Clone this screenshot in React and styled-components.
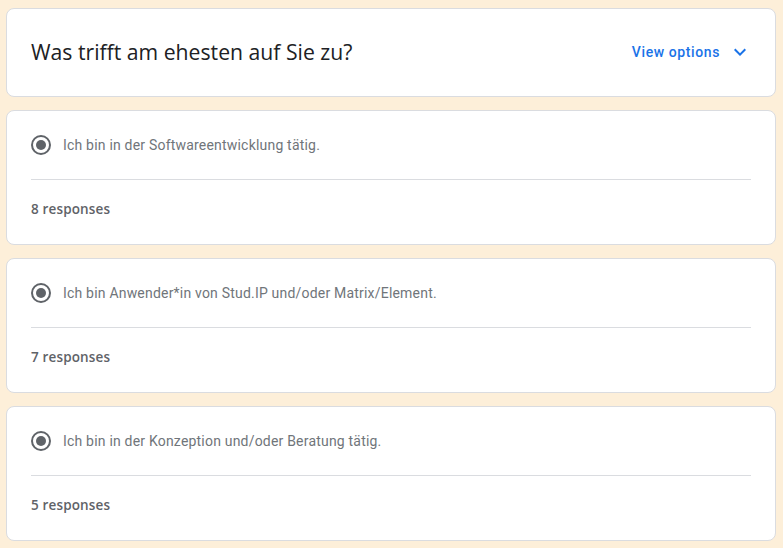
import React from 'react';
import styled, { createGlobalStyle } from 'styled-components';

const GlobalStyle = createGlobalStyle`
    html, body {
        margin: 0;
        padding: 0;
        background: #fdefd9;
        font-family: Roboto, 'Liberation Sans', sans-serif;
    }
`;

const PageStyled = styled.div`
    display: flex;
    flex-direction: column;
    gap: 13px;
    padding: 8px 7px 7px 6px;
`;

const CardStyled = styled.div`
    background: #fff;
    border: 1px solid #dadce0;
    border-radius: 8px;
    padding: ${(p) => p.$padding || '24px'};
`;

const HeaderRow = styled.div`
    display: flex;
    align-items: center;
    justify-content: space-between;
    height: 87px;
    padding: 0 23px 2px 24px;
    box-sizing: border-box;
`;

const TitleStyled = styled.h2`
    margin: 0;
    font-family: 'Open Sans', Roboto, sans-serif;
    font-weight: 400;
    font-size: 21.2px;
    color: #202124;
`;

const ViewOptionsButton = styled.button`
    display: flex;
    align-items: center;
    gap: 8px;
    background: none;
    border: none;
    padding: 0;
    cursor: pointer;
    color: #1a73e8;
    font-family: Roboto, sans-serif;
    font-weight: 500;
    font-size: 14px;
    letter-spacing: 0.6px;

    svg {
        width: 24px;
        height: 24px;
        fill: #1a73e8;
    }
`;

const OptionRow = styled.div`
    display: flex;
    align-items: center;
    gap: 12px;
    height: 20px;
    padding-bottom: 24px;
    border-bottom: 1px solid #dadce0;
`;

const RadioStyled = styled.span`
    width: 20px;
    height: 20px;
    box-sizing: border-box;
    border: 2px solid #5f6368;
    border-radius: 50%;
    display: flex;
    align-items: center;
    justify-content: center;
    flex-shrink: 0;

    &::after {
        content: '';
        width: 10px;
        height: 10px;
        border-radius: 50%;
        background: #5f6368;
    }
`;

const LabelStyled = styled.span`
    font-size: 14px;
    color: #70757a;
    letter-spacing: 0.2px;
`;

const ResponsesStyled = styled.div`
    padding-top: 19px;
    line-height: 20px;
    font-family: 'Open Sans', Roboto, sans-serif;
    font-size: 13.5px;
    font-weight: 600;
    color: #5f6368;
    letter-spacing: 0.15px;
`;

const options = [
    { label: 'Ich bin in der Softwareentwicklung tätig.', count: 8 },
    { label: 'Ich bin Anwender*in von Stud.IP und/oder Matrix/Element.', count: 7 },
    { label: 'Ich bin in der Konzeption und/oder Beratung tätig.', count: 5 },
];

export default function App() {
    return (
        <>
            <GlobalStyle />
            <PageStyled>
                <CardStyled $padding="0">
                    <HeaderRow>
                        <TitleStyled>Was trifft am ehesten auf Sie zu?</TitleStyled>
                        <ViewOptionsButton>
                            View options
                            <svg viewBox="0 0 24 24">
                                <path d="M16.59 8.59L12 13.17 7.41 8.59 6 10l6 6 6-6z" />
                            </svg>
                        </ViewOptionsButton>
                    </HeaderRow>
                </CardStyled>
                {options.map((opt) => (
                    <CardStyled key={opt.label} $padding="24px 24px 25px">
                        <OptionRow>
                            <RadioStyled />
                            <LabelStyled>{opt.label}</LabelStyled>
                        </OptionRow>
                        <ResponsesStyled>{opt.count} responses</ResponsesStyled>
                    </CardStyled>
                ))}
            </PageStyled>
        </>
    );
}
